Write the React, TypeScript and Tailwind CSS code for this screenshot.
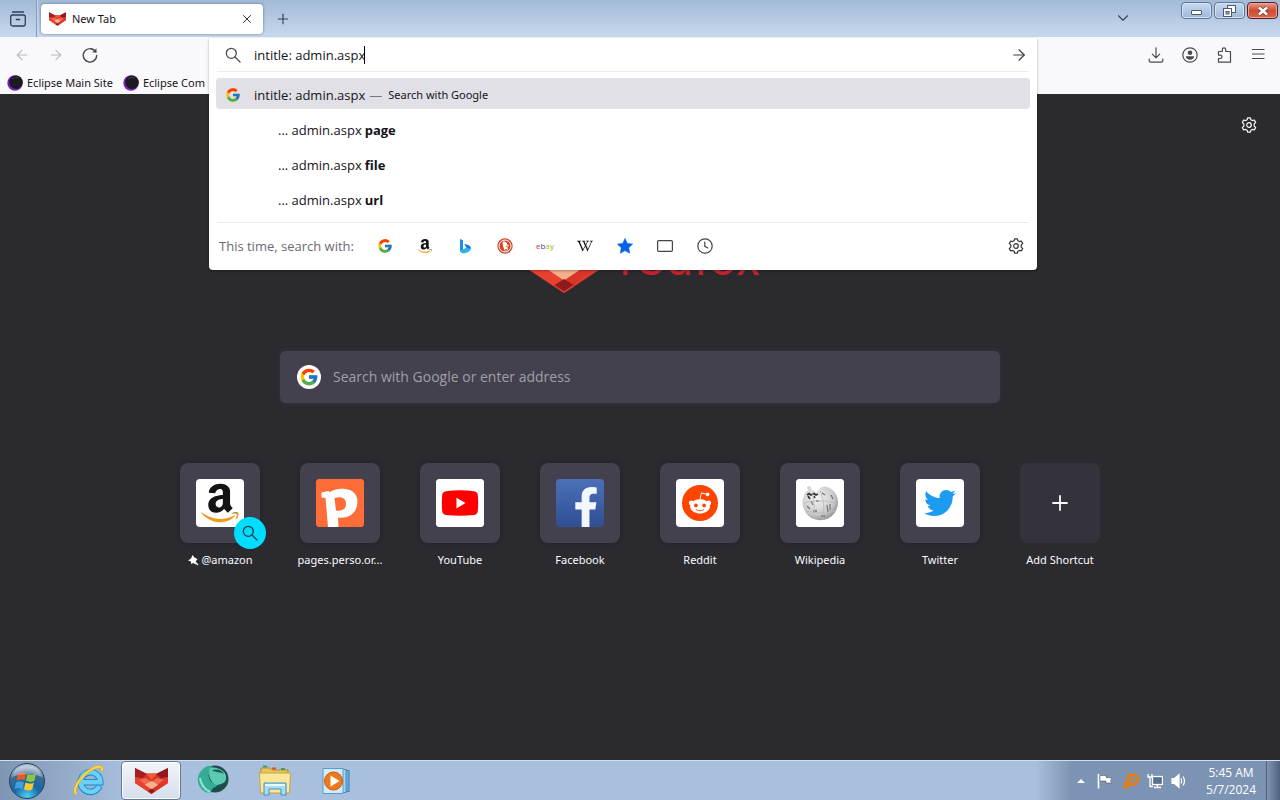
import React, { useState } from "react";
import { ArrowLeft, ArrowRight, ChevronDown, Plus, Search, X } from "lucide-react";
import { FaAmazon, FaFacebookF, FaRedditAlien, FaTwitter, FaWikipediaW } from "react-icons/fa";
import { FcGoogle } from "react-icons/fc";

type IconProps = { className?: string };

function Fox({ className }: IconProps) {
  return (
    <svg viewBox="0 0 33 26" className={className} aria-hidden="true">
      <polygon points="0,0 11,5.5 22,5.5 33,0 33,15 16.5,26 0,15" fill="#d93428" />
      <polygon points="0,0 12,6 6,11 0,9" fill="#a51f22" />
      <polygon points="33,0 21,6 27,11 33,9" fill="#8f1a1f" />
      <polygon points="11,5.5 22,5.5 16.5,12" fill="#ef5a3c" />
      <polygon points="0,9 6,10 16.5,19 14,24.3 0,15" fill="#e8412f" />
      <polygon points="33,9 27,10 16.5,19 19,24.3 33,15" fill="#e0382a" />
      <polygon points="4,12 11,10 16.5,14 22,10 29,12 16.5,20.5" fill="#ee6a4c" />
      <polygon points="10,16.5 16.5,13 23,16.5 23,17.500 16.5,21.500 10,17.500" fill="#f5b08c" />
      <polygon points="5,16 10,17 20,23.700 16.500,26" fill="#e8412f" />
      <polygon points="28,16 23,17 13,23.700 16.500,26" fill="#d93428" />
      <polygon points="16.5,20.800 20,23 16.5,25.300 13,23" fill="#8c1a1e" />
    </svg>
  );
}

function Gear({ className }: IconProps) {
  return (
    <svg viewBox="0 0 16 16" className={className} fill="none" stroke="currentColor" strokeWidth="1.2" strokeLinejoin="round" aria-hidden="true">
      <path d="M6.6 .8h2.8l.5 2 1.4.8 2-.6 1.4 2.4-1.5 1.5v2.2l1.5 1.5-1.4 2.4-2-.6-1.4.8-.5 2H6.6l-.5-2-1.4-.8-2 .6-1.4-2.4 1.5-1.5V6.9L1.300 5.400l1.400-2.400 2 .6 1.400-.8z" />
      <circle cx="8" cy="8" r="2.300" />
    </svg>
  );
}

function Archive() {
  return (
    <svg viewBox="0 0 16 16" className="size-4" fill="none" stroke="currentColor" strokeWidth="1.3" strokeLinecap="round" aria-hidden="true">
      <path d="M2.500 1h11M6.300 8.500h3.400" />
      <rect x="0.700" y="4" width="14.600" height="11" rx="2" />
    </svg>
  );
}

function Reload() {
  return (
    <svg viewBox="0 0 16 16" className="size-4" fill="none" stroke="currentColor" strokeWidth="1.4" strokeLinecap="round" aria-hidden="true">
      <path d="M13.800 5A6.700 6.700 0 1 0 14.700 8.500" />
      <path d="M14.500 1.200v4.300h-4.300z" fill="currentColor" stroke="none" />
    </svg>
  );
}

function Magnifier({ className }: IconProps) {
  return (
    <svg viewBox="0 0 16 16" className={className} fill="none" stroke="currentColor" strokeWidth="1.3" strokeLinecap="round" aria-hidden="true">
      <circle cx="6.300" cy="6.300" r="5" />
      <path d="M10 10l5 5" />
    </svg>
  );
}

function Download() {
  return (
    <svg viewBox="0 0 16 16" className="size-4" fill="none" stroke="currentColor" strokeWidth="1.2" strokeLinecap="round" strokeLinejoin="round" aria-hidden="true">
      <path d="M8 .8v10M4.300 7.200 8 10.900l3.700-3.700M1.200 12v1.500c0 1 .6 1.600 1.600 1.600h10.400c1 0 1.600-.6 1.600-1.600V12" />
    </svg>
  );
}

function Account() {
  return (
    <svg viewBox="0 0 16 16" className="size-4" aria-hidden="true">
      <circle cx="8" cy="8" r="7.200" fill="none" stroke="currentColor" strokeWidth="1.2" />
      <circle cx="8" cy="5.800" r="2.300" fill="currentColor" />
      <path d="M3.900 9.300h8.200c0 2.200-1.800 3.500-4.100 3.500s-4.100-1.300-4.100-3.500z" fill="currentColor" />
    </svg>
  );
}

function Extension() {
  return (
    <svg viewBox="0 0 16 16" className="size-4" fill="none" stroke="currentColor" strokeWidth="1.2" strokeLinejoin="round" aria-hidden="true">
      <path d="M6.300 4.500V2.500a1.700 1.700 0 0 1 3.400 0v2h4.800v10.700H2.500v-3.700h1.800a1.700 1.700 0 0 0 0-3.400H2.500V4.500z" />
    </svg>
  );
}

function Lines() {
  return (
    <svg viewBox="0 0 16 16" className="size-4" stroke="currentColor" strokeWidth="1.2" aria-hidden="true">
      <path d="M2 2.500h12.500M2 7h12.500M2 11.500h12.500" />
    </svg>
  );
}

function EclipseOrb() {
  return (
    <svg viewBox="0 0 16 16" className="size-4 shrink-0" aria-hidden="true">
      <circle cx="8" cy="8" r="7.700" fill="#7a1fc4" />
      <circle cx="9" cy="7.300" r="6.800" fill="#1a1a20" />
      <path d="M5 4a6 6 0 0 1 7-1" stroke="#3c3c45" strokeWidth="1" fill="none" />
    </svg>
  );
}

function AmazonMark({ className, id }: { className?: string; id: string }) {
  return (
    <>
      <svg className="absolute size-0" aria-hidden="true">
        <defs>
          <linearGradient id={id} x1="0" y1="0" x2="0" y2="1">
            <stop offset="0.76" stopColor="#141414" />
            <stop offset="0.76" stopColor="#f39a1c" />
          </linearGradient>
        </defs>
      </svg>
      <FaAmazon className={className} fill={`url(#${id})`} aria-hidden="true" />
    </>
  );
}

function Bing() {
  return (
    <svg viewBox="0 0 16 16" className="size-4" aria-hidden="true">
      <path d="M3 1l3 1.200v10L3 14z" fill="#1b8ff0" />
      <path d="M3 12.500 6 11.500l3.500-2L7.500 6 12 7.500q2 1 1.800 3.500-.5 2-3 3.300L7 15.500q-3 0-4-3z" fill="#2bb3ea" />
      <path d="M7.300 5.800 12 7.500q2 1 1.800 3.300l-4.300-1.300z" fill="#1c6fe0" />
    </svg>
  );
}

function Duck() {
  return (
    <svg viewBox="0 0 16 16" className="size-4" aria-hidden="true">
      <circle cx="8" cy="8" r="7.700" fill="#d9412b" />
      <circle cx="8" cy="8" r="6" fill="none" stroke="#fff" strokeWidth="1" />
      <path d="M5.500 4c2-1 4.500 0 4.800 2.500l1.700 1-1.500 1.500.5 3.500H7.500L6 8z" fill="#fff" />
      <path d="M8.500 7.500l3.800-.3-1.500 1.700-2.300.3z" fill="#f5b81c" />
      <path d="M8 11l2.500.2-.3 1.500H8z" fill="#57a447" />
    </svg>
  );
}

function Ebay() {
  return (
    <span className="text-[8px] leading-4" aria-hidden="true">
      <span className="text-[#e53238]">e</span>
      <span className="text-[#3a3fc0]">b</span>
      <span className="text-[#d9a400]">a</span>
      <span className="text-[#86b817]">y</span>
    </span>
  );
}

function Star() {
  return (
    <svg viewBox="0 0 16 16" className="size-4" aria-hidden="true">
      <path d="M8 .5l2.300 4.900 5.300.7-3.900 3.700 1 5.400L8 12.600l-4.700 2.600 1-5.400L.4 6.100l5.300-.7z" fill="#0561e8" stroke="#0561e8" strokeWidth="0.600" strokeLinejoin="round" />
    </svg>
  );
}

function TabIcon() {
  return (
    <svg viewBox="0 0 16 16" className="size-4" aria-hidden="true">
      <rect x="0.600" y="2.600" width="14.800" height="10.800" rx="1.200" fill="none" stroke="#444" strokeWidth="1.200" />
    </svg>
  );
}

function Clock() {
  return (
    <svg viewBox="0 0 16 16" className="size-4" fill="none" stroke="#444" strokeWidth="1.200" strokeLinecap="round" aria-hidden="true">
      <circle cx="8" cy="8" r="7.200" />
      <path d="M7.800 4v4.300l3 1.700" />
    </svg>
  );
}

function Pin() {
  return (
    <svg viewBox="0 0 12 12" className="size-3 shrink-0" fill="#fbfbfe" aria-hidden="true">
      <path d="M5.500 1 7.500 3.500 10.500 5 8.800 7.200 9 10.500 6.200 9 4 10 4 7.500 1 6.500 4 4.500z" />
      <path d="M8 8l3 3" stroke="#fbfbfe" strokeWidth="1.300" />
    </svg>
  );
}

function PersoTile() {
  return (
    <svg viewBox="0 0 48 48" className="size-12" aria-hidden="true">
      <rect width="48" height="48" fill="#fe6d38" />
      <path
        fillRule="evenodd"
        fill="#fff"
        d="M5.500 13.500l7-1.500 1 1.200C18 10.500 23 9.300 29 10c9 1 13 6 12.300 14.500C40.500 34 33 40 22 38.500l.5 9.500H12L9.500 19l-4-.5zM18.500 19l1.500 12.500c6.500 1 10.500-2 10-7.500-.5-5-5-7-11.500-5z"
      />
    </svg>
  );
}

function YoutubeTile() {
  return (
    <svg viewBox="0 0 48 48" className="size-12" aria-hidden="true">
      <rect width="48" height="48" fill="#fff" />
      <path d="M10 12.200Q24 10.500 38 12.200 41.500 12.600 41.800 16 42.500 24 41.800 32 41.500 35.600 38 36 24 37.600 10 36 6.500 35.600 6.200 32 5.500 24 6.200 16 6.500 12.600 10 12.200z" fill="#fe0000" />
      <path d="M20.500 18.800v10.600l9-5.300z" fill="#fff" />
    </svg>
  );
}

function WikiGlobe() {
  return (
    <svg viewBox="0 0 48 48" className="size-12" aria-hidden="true">
      <defs>
        <radialGradient id="globe" cx="0.400" cy="0.350" r="0.700">
          <stop offset="0" stopColor="#f4f4f4" />
          <stop offset="0.700" stopColor="#c9c9c9" />
          <stop offset="1" stopColor="#8b8b8b" />
        </radialGradient>
      </defs>
      <rect width="48" height="48" fill="#fff" />
      <path d="M9 14l3-3-1-3 3-1 2 4 5 2 3-4 4-1.500c7 0 14 7 14 15.500a17.700 17.700 0 0 1-35.500 1c0-4 1-7 2.500-10z" fill="url(#globe)" />
      <path d="M11 16l2-1.500 2 1.500 3-1.500 2 1.500 2-1M12 17l2 3M18 17l1 2" stroke="#333" strokeWidth="1.600" fill="none" />
      <path d="M15 22l2 4M20 22h3M31 26l1 7M34 25v6M17 32h4M26 14l3 2M35 16l2 4M11 27l3 3M25 37h4" stroke="#777" strokeWidth="1.300" fill="none" />
      <path d="M16 13c2 8 3 19 2 27M24 12c4 8 5 20 2 29M8 24c10-3 24-3 33 1M10 32c9 2 20 3 29 0" stroke="#b9b9b9" strokeWidth="0.800" fill="none" />
    </svg>
  );
}

const tiles = [
  { label: "@amazon", pinned: true, bg: "bg-white", icon: <AmazonMark id="amazonTile" className="size-11" /> },
  { label: "pages.perso.or...", bg: "bg-[#fe6d38]", icon: <PersoTile /> },
  { label: "YouTube", bg: "bg-white", icon: <YoutubeTile /> },
  { label: "Facebook", bg: "bg-linear-to-b from-[#4c71b8] to-[#2f4e93] items-end! pl-3", icon: <FaFacebookF className="size-10 text-[#f2f6fd]" /> },
  {
    label: "Reddit",
    bg: "bg-white",
    icon: (
      <span className="flex size-9 items-center justify-center rounded-full bg-[#fd4500]">
        <FaRedditAlien className="size-6 text-white" />
      </span>
    ),
  },
  { label: "Wikipedia", bg: "bg-white", icon: <WikiGlobe /> },
  { label: "Twitter", bg: "bg-white", icon: <FaTwitter className="size-8 text-[#1d9bf0]" /> },
];

const engines = [
  { name: "Google", icon: <FcGoogle className="size-4" /> },
  { name: "Amazon", icon: <AmazonMark id="amazonSmall" className="size-4" /> },
  { name: "Bing", icon: <Bing /> },
  { name: "DuckDuckGo", icon: <Duck /> },
  { name: "eBay", icon: <Ebay /> },
  { name: "Wikipedia", icon: <FaWikipediaW className="size-4 text-[#111]" /> },
  { name: "Bookmarks", icon: <Star /> },
  { name: "Tabs", icon: <TabIcon /> },
  { name: "History", icon: <Clock /> },
];

function TabStrip() {
  return (
    <div className="flex h-[37px] items-start bg-linear-to-b from-[#a3bad6] to-[#c8d9ee]">
      <button aria-label="View recent browsing" className="flex h-full w-9 items-center justify-center text-[#2f3f55]">
        <Archive />
      </button>
      <div className="h-full w-0.5 border-l border-[#7f9bbd] bg-[#c7d8ec]" />
      <div className="mt-1 ml-[3px] flex h-[30px] w-[222px] items-center gap-1.5 rounded bg-white px-2 shadow-[0_0_3px_rgba(40,60,90,0.6)]">
        <Fox className="h-4 w-[17px] shrink-0" />
        <span className="grow font-['Noto_Sans',sans-serif] text-[11px] text-[#15141a]">New Tab</span>
        <button aria-label="Close tab" className="flex size-4 items-center justify-center text-[#222]">
          <X className="size-3.5" strokeWidth={1.6} />
        </button>
      </div>
      <button aria-label="Open a new tab" className="ml-3 flex h-full w-4 items-center justify-center text-[#2f3f55]">
        <Plus className="size-4" strokeWidth={1.7} />
      </button>
      <div className="grow" />
      <button aria-label="List all tabs" className="mr-[50px] flex h-[35px] w-4 items-center justify-center text-[#34465f]">
        <ChevronDown className="size-[18px] shrink-0" strokeWidth={1.5} />
      </button>
      <div className="mt-0.5 mr-0.5 flex gap-0.5">
        <button aria-label="Minimize" className="flex h-[17px] w-[31px] items-center justify-center rounded-sm border border-[#5d7798] bg-linear-to-b from-[#c6d8ee] to-[#9db8da] shadow-[inset_0_0_0_1px_#d5e3f4]">
          <span className="mt-1 h-[5px] w-[11px] rounded-[1px] border border-[#4b5a70] bg-white" />
        </button>
        <button aria-label="Restore" className="flex h-[17px] w-[31px] items-center justify-center rounded-sm border border-[#5d7798] bg-linear-to-b from-[#c6d8ee] to-[#9db8da] shadow-[inset_0_0_0_1px_#d5e3f4]">
          <svg viewBox="0 0 13 12" className="h-3 w-[13px]" fill="#fff" stroke="#4b5a70" aria-hidden="true">
            <rect x="4.500" y="0.500" width="8" height="7" />
            <rect x="0.500" y="3.500" width="8" height="8" />
            <rect x="3" y="6.500" width="3" height="2.500" fill="#9db8da" />
          </svg>
        </button>
        <button aria-label="Close" className="flex h-[17px] w-[31px] items-center justify-center rounded-sm border border-[#5a1b17] bg-linear-to-b from-[#e39a8b] via-[#cf4a34] to-[#d8664a] shadow-[inset_0_0_0_1px_#eaa99b]">
          <svg viewBox="0 0 12 10" className="h-2.5 w-3" aria-hidden="true">
            <path d="M2 1.500l8 7M10 1.500l-8 7" stroke="#6b3a36" strokeWidth="4" />
            <path d="M2 1.500l8 7M10 1.500l-8 7" stroke="#fff" strokeWidth="2.600" />
          </svg>
        </button>
      </div>
    </div>
  );
}

function AddressPanel() {
  const [query, setQuery] = useState("intitle: admin.aspx");
  return (
    <div className="absolute inset-x-0 top-px z-10 rounded-b bg-white shadow-[0_1px_3px_rgba(0,0,0,0.3)]">
      <div className="mx-2 flex h-[34px] items-center border-b border-[#ececef] pr-px pl-2">
        <Magnifier className="size-4 text-[#4a4a52]" />
        <input
          aria-label="Search or enter address"
          className="ml-[13px] field-sizing-content bg-transparent text-[#15141a] outline-none"
          value={query}
          onChange={(e) => setQuery(e.target.value)}
        />
        <span className="-ml-px h-[18px] w-px bg-black" />
        <span className="grow" />
        <button aria-label="Go" className="text-[#3c3c44]">
          <ArrowRight className="size-[18px]" strokeWidth={1.5} />
        </button>
      </div>
      <ul className="mx-[7px] mt-1.5 flex flex-col gap-1">
        <li className="flex h-[31px] items-center rounded bg-[#e0e0e6] pt-0.5 pl-[9px]">
          <FcGoogle className="size-4" />
          <span className="ml-[13px]">{query}</span>
          <span className="mr-1.5 ml-1 text-[#77777f]">—</span>
          <span className="font-['Noto_Sans',sans-serif] text-[11px]">Search with Google</span>
        </li>
        {["page", "file", "url"].map((word) => (
          <li key={word} className="flex h-[31px] items-center gap-[3px] pt-0.5 pl-[62px]">
            <span>... admin.aspx</span>
            <b>{word}</b>
          </li>
        ))}
      </ul>
      <div className="mx-2 mt-2 flex h-12 items-center border-t border-[#ececef] pr-[5px] pb-px pl-0.5">
        <span className="w-[146px] text-[#6a6a72]">This time, search with:</span>
        {engines.map((engine) => (
          <button key={engine.name} aria-label={engine.name} className="flex h-8 w-10 items-center justify-center">
            {engine.icon}
          </button>
        ))}
        <span className="grow" />
        <button aria-label="Change search settings" className="text-[#33333a]">
          <Gear className="size-4" />
        </button>
      </div>
    </div>
  );
}

function Toolbar() {
  return (
    <div className="flex h-[57px] bg-[#f9f9fb]">
      <div className="flex w-[209px] shrink-0 flex-col">
        <div className="flex h-[35px] shrink-0 items-center gap-[18px] pl-3.5">
          <button aria-label="Back" className="text-[#b9b9be]">
            <ArrowLeft className="size-4" strokeWidth={1.7} />
          </button>
          <button aria-label="Forward" className="text-[#b9b9be]">
            <ArrowRight className="size-4" strokeWidth={1.7} />
          </button>
          <button aria-label="Reload" className="text-[#4a4a52]">
            <Reload />
          </button>
        </div>
        <div className="flex h-[22px] items-center gap-2.5 pl-[7px] font-['Noto_Sans',sans-serif] text-[11px] whitespace-nowrap text-[#15141a]">
          {["Eclipse Main Site", "Eclipse Com"].map((name) => (
            <a key={name} href="#" className="flex items-center gap-1">
              <EclipseOrb />
              {name}
            </a>
          ))}
        </div>
      </div>
      <div className="relative grow">
        <AddressPanel />
      </div>
      <div className="flex h-[35px] w-[243px] shrink-0 items-center justify-end gap-[18px] pr-3.5 text-[#4a4a52]">
        <button aria-label="Downloads"><Download /></button>
        <button aria-label="Account"><Account /></button>
        <button aria-label="Extensions"><Extension /></button>
        <button aria-label="Menu"><Lines /></button>
      </div>
    </div>
  );
}

function NewTabPage() {
  return (
    <main className="relative flex grow flex-col items-center bg-[#2b2a2f] px-4 pt-[129px] pb-8 text-[#fbfbfe]">
      <button aria-label="Personalize new tab" className="absolute top-[23px] right-[23px]">
        <Gear className="size-4" />
      </button>
      <div className="flex h-[70px] items-center gap-2.5">
        <Fox className="h-[70px] w-[90px]" />
        <span className="font-['Inter','Liberation_Sans',sans-serif] text-[46px] leading-[70px] text-[#c8222b]">r3dfox</span>
      </div>
      <label className="mt-[58px] flex h-[52px] w-full max-w-[720px] items-center gap-3 rounded-md bg-[#42414d] px-[17px] shadow-[0_0_4px_rgba(66,65,77,0.6)]">
        <span className="flex size-6 shrink-0 items-center justify-center rounded-full bg-white">
          <FcGoogle className="size-5" />
        </span>
        <input aria-label="Search" placeholder="Search with Google or enter address" className="grow bg-transparent text-sm outline-none placeholder:text-[#a09fa8]" />
      </label>
      <div className="mt-[60px] flex flex-wrap justify-center font-['Noto_Sans',sans-serif] text-[11px] leading-[18px]">
        {tiles.map((tile) => (
          <a key={tile.label} href="#" className="flex w-[120px] flex-col items-center">
            <span className="relative flex size-20 items-center justify-center rounded-lg bg-[#42414d] shadow-[0_0_4px_rgba(30,28,48,0.7)]">
              <span className={`flex size-12 items-center justify-center overflow-hidden rounded ${tile.bg}`}>{tile.icon}</span>
              {tile.pinned && (
                <span className="absolute -right-1.5 -bottom-1.5 flex size-8 items-center justify-center rounded-full bg-[#00ddff] text-[#15394a]">
                  <Magnifier className="size-4" />
                </span>
              )}
            </span>
            <span className="mt-2 flex items-center gap-0.5">
              {tile.pinned && <Pin />}
              {tile.label}
            </span>
          </a>
        ))}
        <button className="flex w-[120px] flex-col items-center">
          <span className="flex size-20 items-center justify-center rounded-lg bg-[#34333c]">
            <Plus className="size-6" strokeWidth={1.8} />
          </span>
          <span className="mt-2">Add Shortcut</span>
        </button>
      </div>
    </main>
  );
}

function StartOrb() {
  return (
    <svg viewBox="0 0 38 38" className="size-[38px]" aria-hidden="true">
      <defs>
        <radialGradient id="orb" cx="0.500" cy="0.950" r="0.850">
          <stop offset="0" stopColor="#4fd0f5" />
          <stop offset="0.450" stopColor="#1668a5" />
          <stop offset="0.800" stopColor="#3d6a93" />
          <stop offset="1" stopColor="#a9bccd" />
        </radialGradient>
      </defs>
      <circle cx="19" cy="19" r="17.500" fill="url(#orb)" stroke="#23425f" />
      <path d="M10 12q4-2.500 8-.5l-1.500 7q-4-2-8 .3z" fill="#e8582b" />
      <path d="M19.500 12q4 2 8.500 0l-1.700 7q-4.300 2-8.300-.2z" fill="#8cc63e" />
      <path d="M8 20.500q4-2.200 8-.3l-1.500 6.800q-4-2-8 .2z" fill="#3f9fe0" />
      <path d="M17.500 20.500q4.300 2 8.400.2l-1.700 6.800q-4 2-8.200-.3z" fill="#fbc92d" />
      <path d="M4 15a15.500 15.500 0 0 1 30 0q-15-6-30 0z" fill="#fff" opacity="0.300" />
    </svg>
  );
}

function InternetExplorer() {
  return (
    <svg viewBox="0 0 32 32" className="size-8" aria-hidden="true">
      <path d="M26.500 21A9.800 9.800 0 1 1 27.300 17.300H10" fill="none" stroke="#1a86cc" strokeWidth="6.400" />
      <path d="M26.300 21.300A9.800 9.800 0 1 1 27.300 17.300H10" fill="none" stroke="#6bd0f5" strokeWidth="4.600" />
      <path d="M3 29c-4-6 6-19 16-25 6-3.500 11-3 10 2" fill="none" stroke="#e9a913" strokeWidth="3" />
      <path d="M3 29c-4-6 6-19 16-25 6-3.500 11-3 10 2" fill="none" stroke="#fbd84a" strokeWidth="1.800" />
    </svg>
  );
}

function TealOrb() {
  return (
    <svg viewBox="0 0 32 32" className="size-8" aria-hidden="true">
      <circle cx="18" cy="14" r="13.500" fill="#1f4c4b" />
      <path d="M11 1C3 4 0 11 1 17s6 11 12 11c2-1 1-3 3-5 3-1 4-2 5-4C12 20 8 8 16 3c-1-2-3-2.500-5-2z" fill="#35ad94" />
      <path d="M13 3c6-2 15 2 16 8s-3 8-9 9c-6-1-10-10-7-17z" fill="#5cc9b2" />
      <path d="M15 6c4-3 10-1 12 3-4-2-8-2-12-3z" fill="#1f5c57" />
      <path d="M3 13c1 7 4 11 10 14" stroke="#8fe3d1" strokeWidth="2" fill="none" />
    </svg>
  );
}

function Explorer() {
  return (
    <svg viewBox="0 0 34 32" className="h-8 w-[34px]" aria-hidden="true">
      <path d="M3 3h9l2 2h16v22H3z" fill="#e8c65c" stroke="#b18d2e" />
      <path d="M5 1.500h4M23 4h4" stroke="#3aa655" strokeWidth="2" />
      <path d="M14 3.500h4" stroke="#d9512c" strokeWidth="2" />
      <path d="M1.500 8h31l-1 20h-29z" fill="#fbe79a" stroke="#c9a23f" />
      <path d="M6 30V18h22v12h-5v-6H11v6z" fill="#a7dcf5" stroke="#3f8fc2" />
      <path d="M7 20h20" stroke="#e9f8ff" strokeWidth="2" />
    </svg>
  );
}

function MediaPlayer() {
  return (
    <svg viewBox="0 0 28 26" className="h-[26px] w-7" aria-hidden="true">
      <rect x="7" y="2.500" width="20" height="21" fill="#6aa9d6" stroke="#3c7fb3" />
      <rect x="4" y="1.500" width="20" height="23" fill="#a8d3ef" stroke="#4c8fc0" />
      <rect x="1" y="0.500" width="20" height="25" fill="#d3eafa" stroke="#5b9bca" />
      <circle cx="11.500" cy="13" r="9" fill="#ef7a1b" stroke="#c95a0c" />
      <path d="M8.500 7.500v11l9-5.500z" fill="#fff" />
    </svg>
  );
}

function Taskbar() {
  return (
    <footer className="flex h-10 shrink-0 items-stretch border-t border-[#d3deec] bg-linear-to-r from-[#7f95b4] via-[#a9bfde] via-10% to-[#a9bfde]">
      <button aria-label="Start" className="flex w-[54px] items-center justify-center"><StartOrb /></button>
      <button aria-label="Internet Explorer" className="ml-1 flex w-[62px] items-center justify-center"><InternetExplorer /></button>
      <button aria-label="r3dfox" className="ml-px flex w-[60px] items-center justify-center rounded-sm border border-[#64799a] bg-linear-to-b from-[#f2f5f9] to-[#d5dfec] shadow-[inset_0_0_0_1px_#fff]">
        <Fox className="h-[26px] w-[33px]" />
      </button>
      <button aria-label="Browser" className="ml-px flex w-[62px] items-center justify-center"><TealOrb /></button>
      <button aria-label="Windows Explorer" className="flex w-[62px] items-center justify-center"><Explorer /></button>
      <button aria-label="Media Player" className="flex w-[60px] items-center justify-center"><MediaPlayer /></button>
      <div className="grow" />
      <div className="flex items-center bg-linear-to-r from-transparent to-[#7c93b3] to-15% pl-[42px] text-white">
        <button aria-label="Show hidden icons" className="mr-3">
          <svg viewBox="0 0 8 4" className="h-1 w-2" fill="#fff" aria-hidden="true"><path d="M0 4l4-4 4 4z" /></svg>
        </button>
        <svg viewBox="0 0 16 16" className="mr-2.5 size-4" aria-hidden="true">
          <path d="M1.500 1v14.500" stroke="#fff" strokeWidth="1.600" />
          <path d="M3 2.500h6v2l6 .5-1.500 2.500L14.500 10H9V8H3z" fill="#fff" stroke="#3c4a5e" strokeWidth="0.500" />
        </svg>
        <svg viewBox="0 0 16 16" className="mr-2 size-4" fill="none" stroke="#f07d00" aria-hidden="true">
          <circle cx="9.500" cy="6.500" r="5" strokeWidth="2.600" />
          <circle cx="9.500" cy="6.500" r="1.300" strokeWidth="1.500" />
          <path d="M6 10l-5 5M1.500 9.500l4 5" strokeWidth="2.600" />
        </svg>
        <svg viewBox="0 0 16 16" className="mr-2 size-4" fill="none" stroke="#fff" strokeWidth="1.300" aria-hidden="true">
          <rect x="5.500" y="3.500" width="10" height="8" fill="#5b708f" />
          <path d="M7 14.500h7M10.500 12v2M1 1v3h4V1M3 4v9.500h3" />
        </svg>
        <svg viewBox="0 0 16 16" className="mr-[19px] size-4" fill="none" stroke="#fff" strokeWidth="1.200" aria-hidden="true">
          <path d="M1 5.500h2.500L8 1.500v13L3.500 10.500H1z" fill="#fff" />
          <path d="M10 5.500q1.500 2.500 0 5M12 3.500q3 4.500 0 9" />
        </svg>
        <div className="mr-2.5 text-center text-xs leading-[17px] whitespace-nowrap">
          <div>5:45 AM</div>
          <div>5/7/2024</div>
        </div>
        <button aria-label="Show desktop" className="h-full w-3.5 border-l border-[#4d617e] bg-linear-to-r from-[#8196b3] to-[#4f6380]" />
      </div>
    </footer>
  );
}

export default function App() {
  return (
    <div className="flex min-h-screen flex-col font-['Open_Sans','Noto_Sans',sans-serif] text-[13px] leading-5 text-[#15141a]">
      <TabStrip />
      <Toolbar />
      <NewTabPage />
      <Taskbar />
    </div>
  );
}
